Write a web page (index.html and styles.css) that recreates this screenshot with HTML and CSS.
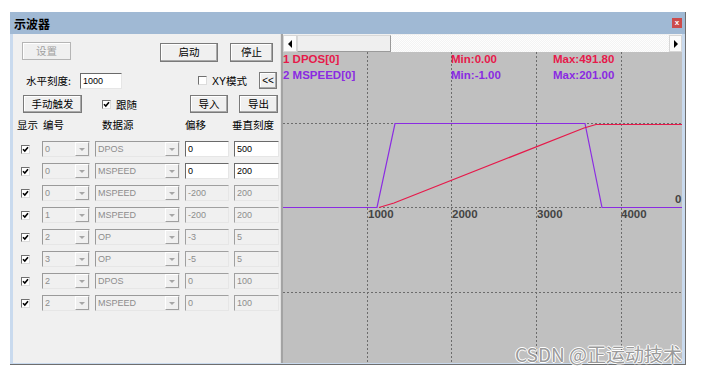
FILE: index.html
```html
<!DOCTYPE html>
<html lang="zh-CN">
  <head>
    <meta charset="UTF-8" />
    <title>示波器</title>
    <link rel="stylesheet" href="styles.css">
  </head>
  <body>
    <div class="window">
      <div class="titlebar">
        <span class="title">示波器</span>
        <span class="close">x</span>
      </div>
      <div class="frame">
        <div class="panel">
          <div class="row row1">
            <button class="btn btn-set" disabled>设置</button>
            <button class="btn btn-start">启动</button>
            <button class="btn btn-stop">停止</button>
          </div>
          <div class="row row2">
            <span class="lbl lbl-scale">水平刻度:</span>
            <span class="edit edit-scale">1000</span>
            <span class="cb cb-xy"></span>
            <span class="lbl lbl-xy">XY模式</span>
            <button class="btn btn-back">&lt;&lt;</button>
          </div>
          <div class="row row3">
            <button class="btn btn-trig">手动触发</button>
            <span class="cb cb-follow"><svg viewBox="0 0 7 7"><path d="M1 3.2 L2.8 5 L6 1.2" /></svg></span>
            <span class="lbl lbl-follow">跟随</span>
            <button class="btn btn-in">导入</button>
            <button class="btn btn-out">导出</button>
          </div>
          <div class="head">
            <span class="h-show">显示</span>
            <span class="h-no">编号</span>
            <span class="h-src">数据源</span>
            <span class="h-off">偏移</span>
            <span class="h-scale">垂直刻度</span>
          </div>
          <div class="grid" id="channels"></div>
        </div>
        <div class="split"></div>
        <div class="scope">
          <div class="scrollbar">
            <span class="sb-btn sb-left"><i></i></span>
            <span class="sb-thumb"></span>
            <span class="sb-track"></span>
            <span class="sb-btn sb-right"><i></i></span>
          </div>
          <div class="plot">
            <svg width="399" height="311" viewBox="0 0 399 311">
              <g class="gridlines">
                <line x1="84.5" y1="0" x2="84.5" y2="311" />
                <line x1="168.5" y1="0" x2="168.5" y2="311" />
                <line x1="253.5" y1="0" x2="253.5" y2="311" />
                <line x1="338.5" y1="0" x2="338.5" y2="311" />
                <line x1="0" y1="71.5" x2="399" y2="71.5" />
                <line x1="0" y1="155.5" x2="399" y2="155.5" />
                <line x1="0" y1="240.5" x2="399" y2="240.5" />
              </g>
              <polyline class="tr-speed" points="0,155.5 94,155.5 112,71.5 302,71.5 319,155.5 399,155.5" />
              <polyline class="tr-pos" points="96,155.5 111,151 301,76 313,72.5 399,72.5" />
              <text class="t-pos" x="0" y="11">1 DPOS[0]</text>
              <text class="t-speed" x="0" y="27">2 MSPEED[0]</text>
              <text class="t-pos" x="168" y="11">Min:0.00</text>
              <text class="t-speed" x="168" y="27">Min:-1.00</text>
              <text class="t-pos" x="270" y="11">Max:491.80</text>
              <text class="t-speed" x="270" y="27">Max:201.00</text>
              <text class="t-axis" x="85" y="166">1000</text>
              <text class="t-axis" x="169" y="166">2000</text>
              <text class="t-axis" x="254" y="166">3000</text>
              <text class="t-axis" x="338" y="166">4000</text>
              <text class="t-axis" x="392" y="151">0</text>
            </svg>
          </div>
        </div>
      </div>
    </div>
    <div class="watermark">CSDN @正运动技术</div>
    <script>
      // 通道表：编号、数据源、偏移、垂直刻度，前两行可编辑
      var channels = [
        ["0", "DPOS", "0", "500", true],
        ["0", "MSPEED", "0", "200", true],
        ["0", "MSPEED", "-200", "200", false],
        ["1", "MSPEED", "-200", "200", false],
        ["2", "OP", "-3", "5", false],
        ["3", "OP", "-5", "5", false],
        ["2", "DPOS", "0", "100", false],
        ["2", "MSPEED", "0", "100", false]
      ];
      var grid = document.getElementById("channels");
      var check = '<svg viewBox="0 0 7 7"><path d="M1 3.2 L2.8 5 L6 1.2" /></svg>';
      for (var i = 0; i < channels.length; i++) {
        var c = channels[i];
        var editCls = c[4] ? "edit" : "edit off";
        grid.innerHTML +=
          '<span class="cell-cb"><span class="cb">' + check + "</span></span>" +
          '<span class="combo"><span class="val">' + c[0] + '</span><span class="arr"><i></i></span></span>' +
          '<span class="combo"><span class="val">' + c[1] + '</span><span class="arr"><i></i></span></span>' +
          '<span class="' + editCls + '">' + c[2] + "</span>" +
          '<span class="' + editCls + '">' + c[3] + "</span>";
      }
    </script>
  </body>
</html>
```

FILE: styles.css
```css
* {
  margin: 0;
  padding: 0;
  box-sizing: border-box;
}
body {
  background: #fff;
  font-family: "Liberation Sans", "Noto Sans CJK SC", sans-serif;
  position: relative;
  width: 705px;
  height: 377px;
  overflow: hidden;
}
.window {
  margin: 12px 0 0 10px;
  width: 676px;
  height: 353px;
  border-right: 1px solid #6e6e6e;
  border-bottom: 1px solid #6e6e6e;
  background: #c9daee;
  display: flex;
  flex-direction: column;
}
.titlebar {
  height: 22px;
  background: #a0b9d4;
  display: flex;
  align-items: center;
  justify-content: space-between;
  padding: 0 3px 0 4px;
}
.title {
  font-family: "Noto Sans CJK SC", sans-serif;
  font-weight: bold;
  font-size: 12px;
  color: #000;
}
.close {
  width: 10px;
  height: 10px;
  background: #cc4b4b;
  color: #fff;
  font-size: 8px;
  font-weight: bold;
  line-height: 9px;
  text-align: center;
}
.frame {
  flex: 1;
  display: flex;
  padding: 0 2px 1px 3px;
}
.panel {
  width: 268px;
  background: #f0f0f0;
  border-right: 1px solid #e2e2e2;
  font-family: "Noto Sans CJK SC", sans-serif;
  font-size: 10.5px;
  color: #000;
}
.split {
  width: 2px;
  background: #a3a3a3;
}
.scope {
  width: 399px;
  background: #f0f0f0;
  padding-top: 1px;
  display: flex;
  flex-direction: column;
}

/* 按钮 */
.btn {
  font-family: "Noto Sans CJK SC", sans-serif;
  font-size: 10.5px;
  background: #f0f0f0;
  color: #000;
  border: 1px solid #7a7a7a;
  box-shadow: inset -1px -1px #a9a9a9, inset 1px 1px #fff;
  line-height: 1;
}
.btn:disabled {
  color: #a0a0a0;
  border-color: #b5b5b5;
  box-shadow: inset 1px 1px #fff;
}
.row {
  display: flex;
  align-items: flex-start;
}
.row1 {
  margin-top: 8px;
  height: 20px;
}
.btn-set {
  margin-left: 9px;
  width: 49px;
  height: 18px;
}
.btn-start {
  margin-left: 89px;
  margin-top: 1px;
  width: 58px;
  height: 19px;
}
.btn-stop {
  margin-left: 12px;
  margin-top: 1px;
  width: 43px;
  height: 19px;
}
.row2 {
  margin-top: 10px;
  height: 17px;
  align-items: center;
}
.lbl-scale {
  margin-left: 13px;
  width: 54px;
}
.edit-scale {
  width: 42px;
}
.cb-xy {
  margin-left: 76px;
}
.lbl-xy {
  margin-left: 5px;
  width: 47px;
  font-family: "Liberation Sans", "Noto Sans CJK SC", sans-serif;
}
.btn-back {
  width: 18px;
  height: 17px;
  font-family: "Liberation Sans", sans-serif;
  font-size: 10px;
}
.row3 {
  margin-top: 6px;
  height: 18px;
  align-items: center;
}
.btn-trig {
  margin-left: 10px;
  width: 59px;
  height: 18px;
}
.cb-follow {
  margin-left: 20px;
}
.lbl-follow {
  margin-left: 5px;
  width: 74px;
}
.btn-in {
  width: 38px;
  height: 18px;
}
.btn-out {
  margin-left: 11px;
  width: 39px;
  height: 18px;
}

/* 表头与通道表 */
.head {
  margin-top: 6px;
  height: 12px;
  line-height: 12px;
  position: relative;
  display: grid;
  grid-template-columns: 26px 59px 83px 47px 50px;
  padding-left: 4px;
}
.head .h-src {
  padding-left: 0;
}
.grid {
  margin-top: 10px;
  margin-left: 4px;
  display: grid;
  grid-template-columns: 20px 48px 85px 44px 45px;
  grid-auto-rows: 16px;
  column-gap: 5px;
  row-gap: 6px;
}
.h-show {
  margin-left: 0;
}
.cell-cb {
  padding: 1px 0 0 4px;
}
.cb {
  display: inline-block;
  width: 9px;
  height: 9px;
  background: #fff;
  border: 1px solid;
  border-color: #707070 #dcdcdc #dcdcdc #707070;
}
.cb svg {
  display: block;
  width: 7px;
  height: 7px;
}
.cb path {
  fill: none;
  stroke: #000;
  stroke-width: 1.6;
}
.combo {
  display: flex;
  height: 16px;
  background: #f0f0f0;
  border: 1px solid;
  border-color: #9a9a9a #e6e6e6 #e6e6e6 #9a9a9a;
  font-family: "Liberation Sans", sans-serif;
  font-size: 9px;
  color: #8d8d8d;
}
.combo .val {
  flex: 1;
  padding-left: 2px;
  line-height: 14px;
}
.combo .arr {
  width: 14px;
  border: 1px solid;
  border-color: #fff #a0a0a0 #a0a0a0 #fff;
  display: flex;
  align-items: center;
  justify-content: center;
  background: #f0f0f0;
}
.combo .arr i {
  width: 0;
  height: 0;
  border-left: 3px solid transparent;
  border-right: 3px solid transparent;
  border-top: 3px solid #a6a6a6;
}
.edit {
  height: 16px;
  background: #fff;
  border: 1px solid;
  border-color: #6a6a6a #e6e6e6 #e6e6e6 #6a6a6a;
  font-family: "Liberation Sans", sans-serif;
  font-size: 9px;
  color: #000;
  padding-left: 2px;
  line-height: 14px;
}
.edit.off {
  background: #f0f0f0;
  border-color: #a0a0a0 #e6e6e6 #e6e6e6 #a0a0a0;
  color: #8d8d8d;
}

/* 滚动条 */
.scrollbar {
  height: 17px;
  display: flex;
  background: #f6f6f6;
}
.sb-btn {
  width: 14px;
  background: #fbfbfb;
  border: 1px solid #d6d6d6;
  display: flex;
  align-items: center;
  justify-content: center;
}
.sb-right {
  width: 13px;
}
.sb-btn i {
  width: 0;
  height: 0;
  border-top: 4px solid transparent;
  border-bottom: 4px solid transparent;
}
.sb-left i {
  border-right: 4px solid #000;
}
.sb-right i {
  border-left: 4px solid #000;
}
.sb-thumb {
  width: 94px;
  background: #efefef;
  border: 1px solid #d8d8d8;
  border-right-color: #9a9a9a;
  border-bottom-color: #9a9a9a;
}
.sb-track {
  flex: 1;
  background: repeating-conic-gradient(#f3f3f3 0 25%, #fdfdfd 0 50%) 0 0 / 2px 2px;
}

/* 波形区 */
.plot {
  height: 311px;
  background: #c0c0c0;
}
.plot svg {
  display: block;
}
.gridlines line {
  stroke: #6c6c6c;
  stroke-width: 1;
  stroke-dasharray: 2 2;
}
.tr-speed {
  fill: none;
  stroke: #8a2be2;
  stroke-width: 1.2;
}
.tr-pos {
  fill: none;
  stroke: #e6194a;
  stroke-width: 1.2;
}
.plot text {
  font-family: "Liberation Sans", sans-serif;
  font-size: 11.5px;
  font-weight: bold;
}
.t-pos {
  fill: #e6194a;
}
.t-speed {
  fill: #8a2be2;
}
.t-axis {
  fill: #444;
}

.watermark {
  position: absolute;
  left: 515px;
  top: 342px;
  font-family: "Noto Sans CJK SC", sans-serif;
  font-size: 19px;
  line-height: 24px;
  color: #9a9a9a;
  text-shadow: 1px 0 #fff, -1px 0 #fff, 0 1px #fff, 0 -1px #fff;
  white-space: nowrap;
}
```
